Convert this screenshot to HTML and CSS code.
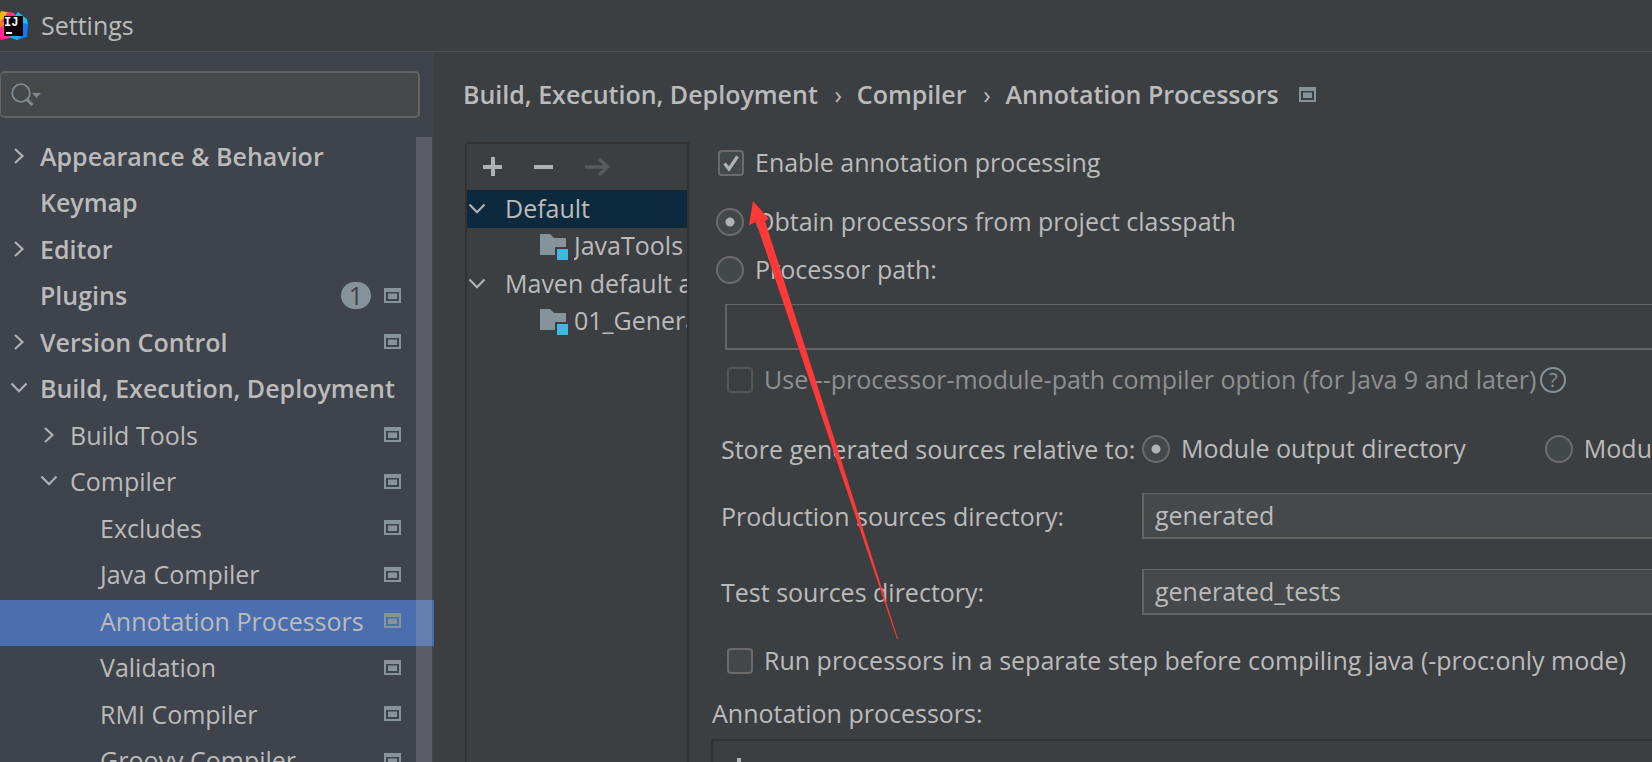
FILE: index.html
```html
<!DOCTYPE html>
<html lang="en">
<head>
<meta charset="utf-8">
<title>Settings</title>
<link rel="stylesheet" href="styles.css">
</head>
<body>
<svg class="defs" aria-hidden="true">
  <symbol id="right" viewBox="0 0 16 18"><path d="M4 2l7.500 7-7.500 7" fill="none" stroke="currentColor" stroke-width="2.200"/></symbol>
  <symbol id="down" viewBox="0 0 18 16"><path d="M1.500 3.500L9 11.200l7.500-7.700" fill="none" stroke="currentColor" stroke-width="2.200"/></symbol>
  <symbol id="project" viewBox="0 0 17 15"><path fill="currentColor" fill-rule="evenodd" d="M0 0h17v15H0zM2 4v9h13V4z"/><path fill="currentColor" d="M4 5.500h9v5.500H4z"/></symbol>
  <symbol id="module" viewBox="0 0 29 28"><path fill="#87939a" d="M0 1h10l4 4h12v9h-11v8H0z"/><path fill="#40b6e0" d="M17 16h11v11H17z"/></symbol>
  <symbol id="plus" viewBox="0 0 20 20"><path fill="currentColor" d="M8 0h4v8h7v4h-7v7H8v-7H0V8h8z"/></symbol>
  <symbol id="minus" viewBox="0 0 20 20"><path fill="currentColor" d="M0 8h19v4H0z"/></symbol>
  <symbol id="forward" viewBox="0 0 25 20"><path d="M0 10h22M14 2l8.500 8-8.500 8" fill="none" stroke="currentColor" stroke-width="3.500"/></symbol>
</svg>

<header class="titlebar">
  <svg class="logo" viewBox="0 0 28 30" aria-hidden="true">
    <path fill="#fdb60d" d="M1 0l12 2-6 10-7 2V3z"/>
    <path fill="#ff318c" d="M8 1l6 1 3 6-8 6-9 2v-4z"/>
    <path fill="#ff2d90" d="M0 15l7-3 7 14-13 3-1-2z"/>
    <path fill="#fc801d" d="M0 10l6 2-6 5z"/>
    <path fill="#07c3f2" d="M18 1l9 7 1 6-8 6-6-14z"/>
    <path fill="#087cfa" d="M28 13l-1 13-10 3-5-5 10-12z"/>
    <path fill="#21a8fa" d="M9 26l8-3 4 3-4 3z"/>
    <path fill="#0b0206" d="M4 5h19v20H4z"/>
    <text class="logo-text" x="4" y="15">IJ</text>
    <path fill="#fff" d="M6 21h6v2H6z"/>
  </svg>
  <h1 class="title">Settings</h1>
</header>

<div class="body">
  <aside class="sidebar">
    <div class="search">
      <svg class="search-icon" viewBox="0 0 32 24" aria-hidden="true"><circle cx="10" cy="10" r="8.800" fill="none" stroke="#7f8b91" stroke-width="1.800"/><path d="M15.500 16l6 6" stroke="#7f8b91" stroke-width="3"/><path fill="#7f8b91" d="M21 10h9l-4.500 5z"/></svg>
      <input class="search-input" type="text" aria-label="Search settings">
    </div>
    <div class="tree-area">
      <nav class="tree" aria-label="Settings categories">
        <a class="row top" href="#"><svg class="chev"><use href="#right"/></svg><span class="name">Appearance &amp; Behavior</span></a>
        <a class="row top" href="#"><span class="chev"></span><span class="name">Keymap</span></a>
        <a class="row top" href="#"><svg class="chev"><use href="#right"/></svg><span class="name">Editor</span></a>
        <a class="row top" href="#"><span class="chev"></span><span class="name">Plugins</span><span class="badge">1</span><svg class="proj"><use href="#project"/></svg></a>
        <a class="row top" href="#"><svg class="chev"><use href="#right"/></svg><span class="name">Version Control</span><svg class="proj"><use href="#project"/></svg></a>
        <a class="row top" href="#"><svg class="chev"><use href="#down"/></svg><span class="name">Build, Execution, Deployment</span></a>
        <a class="row second" href="#"><svg class="chev"><use href="#right"/></svg><span class="name">Build Tools</span><svg class="proj"><use href="#project"/></svg></a>
        <a class="row second" href="#"><svg class="chev"><use href="#down"/></svg><span class="name">Compiler</span><svg class="proj"><use href="#project"/></svg></a>
        <a class="row third" href="#"><span class="name">Excludes</span><svg class="proj"><use href="#project"/></svg></a>
        <a class="row third" href="#"><span class="name">Java Compiler</span><svg class="proj"><use href="#project"/></svg></a>
        <a class="row third selected" href="#" aria-current="page"><span class="name">Annotation Processors</span><svg class="proj"><use href="#project"/></svg></a>
        <a class="row third" href="#"><span class="name">Validation</span><svg class="proj"><use href="#project"/></svg></a>
        <a class="row third" href="#"><span class="name">RMI Compiler</span><svg class="proj"><use href="#project"/></svg></a>
        <a class="row third" href="#"><span class="name">Groovy Compiler</span><svg class="proj"><use href="#project"/></svg></a>
      </nav>
      <div class="scrollbar"></div>
    </div>
  </aside>

  <main class="main">
    <nav class="crumbs" aria-label="Breadcrumb">
      <a href="#">Build, Execution, Deployment</a><span class="sep">›</span><a href="#">Compiler</a><span class="sep">›</span><a href="#">Annotation Processors</a>
      <svg class="proj"><use href="#project"/></svg>
    </nav>
    <div class="columns">
      <section class="profiles" aria-label="Profiles">
        <div class="toolbar">
          <button class="tool" type="button" aria-label="Add"><svg class="tool-icon"><use href="#plus"/></svg></button>
          <button class="tool" type="button" aria-label="Remove"><svg class="tool-icon"><use href="#minus"/></svg></button>
          <button class="tool" type="button" aria-label="Move to" disabled><svg class="tool-icon wide"><use href="#forward"/></svg></button>
        </div>
        <div class="profile-list">
          <div class="profile active"><svg class="chev"><use href="#down"/></svg><span class="profile-name">Default</span></div>
          <div class="profile child"><svg class="mod"><use href="#module"/></svg><span class="profile-name">JavaTools</span></div>
          <div class="profile"><svg class="chev"><use href="#down"/></svg><span class="profile-name">Maven default an</span></div>
          <div class="profile child"><svg class="mod"><use href="#module"/></svg><span class="profile-name">01_Genera</span></div>
        </div>
      </section>

      <form class="form">
        <label class="option lead"><input class="check" type="checkbox" checked><span class="option-text">Enable annotation processing</span></label>
        <div class="sources">
          <label class="option"><input class="radio" type="radio" name="source" checked><span class="option-text">Obtain processors from project classpath</span></label>
          <label class="option"><input class="radio" type="radio" name="source"><span class="option-text">Processor path:</span></label>
        </div>
        <div class="path">
          <input class="field empty" type="text" aria-label="Processor path">
          <div class="option-line">
            <label class="option muted"><input class="check" type="checkbox" disabled><span class="option-text">Use --processor-module-path compiler option (for Java 9 and later)</span></label>
            <button class="help" type="button" aria-label="Help">?</button>
          </div>
        </div>
        <div class="store">
          <span class="caption" id="store">Store generated sources relative to:</span>
          <div class="choices" role="radiogroup" aria-labelledby="store">
            <label class="option"><input class="radio" type="radio" name="store" checked><span class="option-text">Module output directory</span></label>
            <label class="option"><input class="radio" type="radio" name="store"><span class="option-text">Module content root</span></label>
          </div>
          <label class="caption" for="prod">Production sources directory:</label>
          <input class="field" id="prod" type="text" value="generated">
          <label class="caption" for="test">Test sources directory:</label>
          <input class="field" id="test" type="text" value="generated_tests">
        </div>
        <label class="option separate"><input class="check" type="checkbox"><span class="option-text">Run processors in a separate step before compiling java (-proc:only mode)</span></label>
        <h2 class="subhead">Annotation processors:</h2>
        <div class="processors">
          <button class="tool" type="button" aria-label="Add processor"><svg class="tool-icon"><use href="#plus"/></svg></button>
        </div>
      </form>
    </div>
  </main>
</div>

<svg class="pointer" viewBox="0 0 152 440" aria-hidden="true"><path fill="#ff3838" d="M5 1L21 19l-4 2 133 418h-1L8 22l-7 3z"/></svg>
</body>
</html>
```
FILE: styles.css
```css
* { box-sizing: border-box; }

body {
  margin: 0;
  height: 100vh;
  display: flex;
  flex-direction: column;
  overflow: hidden;
  position: relative;
  background: #3c3f41;
  color: #bbbbbb;
  font: 25px/28px "Open Sans", "Noto Sans", sans-serif;
  white-space: nowrap;
}

a { color: inherit; text-decoration: none; }
button, input { font: inherit; color: inherit; margin: 0; }
button { padding: 0; border: 0; background: none; }
svg { display: block; flex: none; }
.defs { position: absolute; width: 0; height: 0; }

.titlebar {
  flex: none;
  display: flex;
  align-items: center;
  gap: 13px;
  height: 52px;
  border-bottom: 1px solid #515456;
}
.logo { width: 28px; height: 30px; }
.logo-text { font: bold 12px "Liberation Mono", monospace; fill: #fff; }
.title { margin: 0; padding-bottom: 2px; font-size: 25px; font-weight: 400; }

.body { flex: 1; min-height: 0; display: flex; }

.sidebar {
  flex: none;
  width: 434px;
  display: flex;
  flex-direction: column;
  padding-top: 19px;
  background: #3e434c;
}
.search {
  flex: none;
  display: flex;
  align-items: center;
  gap: 4px;
  height: 47px;
  margin-right: 14px;
  padding-left: 10px;
  border: 2px solid #646464;
  border-left-width: 1px;
  border-radius: 5px;
  background: #45494a;
}
.search-icon { width: 32px; height: 24px; }
.search-input { flex: 1; min-width: 0; border: 0; outline: 0; background: none; }

.tree-area {
  flex: 1;
  min-height: 0;
  display: grid;
  grid-template-columns: 1fr 18px;
  margin-top: 17px;
  overflow: hidden;
}
.tree {
  grid-area: 1 / 1 / 2 / 3;
  display: grid;
  grid-template-columns: minmax(0, 1fr);
  grid-auto-rows: 46px 47px;
}
.scrollbar {
  grid-area: 1 / 2;
  margin: 2px 2px 0 0;
  background: rgba(166, 166, 166, 0.28);
  z-index: 1;
}
.row { display: flex; align-items: center; padding: 0 33px 5px 0; }
.row.top { padding-left: 10px; font-weight: 600; }
.row.second { padding-left: 40px; }
.row.third { padding-left: 100px; }
.row.selected { background: #4b6eaf; }
.name { margin-right: auto; }
.chev { flex: none; width: 18px; height: 18px; margin-right: 12px; color: #afb1b3; }
.proj { width: 17px; height: 15px; color: #87939a; }
.badge {
  width: 30px;
  height: 27px;
  margin-right: 13px;
  border-radius: 14px;
  background: #87939a;
  color: #3e434c;
  font-weight: 400;
  line-height: 27px;
  text-align: center;
}

.main {
  flex: 1;
  min-width: 0;
  display: flex;
  flex-direction: column;
  padding: 28px 0 0 29px;
}
.crumbs { display: flex; align-items: center; font-weight: 600; }
.sep { width: 39px; padding-left: 2px; font-weight: 400; text-align: center; }
.crumbs .proj { margin-left: 20px; }

.columns { flex: 1; min-height: 0; display: flex; margin-top: 34px; }
.profiles {
  flex: none;
  width: 224px;
  margin-left: 2px;
  border: 2px solid #323232;
  border-bottom: 0;
  overflow: hidden;
}
.toolbar { display: flex; align-items: center; gap: 31px; height: 46px; padding-left: 16px; }
.tool { color: #afb1b3; }
.tool:disabled { color: #5a5a5a; }
.tool-icon { width: 20px; height: 20px; }
.tool-icon.wide { width: 25px; }
.profile-list {
  display: grid;
  grid-template-columns: minmax(0, 1fr);
  grid-auto-rows: 38px 37px;
}
.profile { display: flex; align-items: center; padding-left: 1px; }
.profile-name { min-width: 0; padding-bottom: 2px; line-height: 35px; overflow: hidden; }
.profile .chev { margin-right: 19px; }
.profile.child { padding-left: 73px; }
.profile.active { background: #0d293e; }
.mod { width: 29px; height: 28px; margin-right: 5px; }

.form { flex: 1; min-width: 0; padding: 7px 0 0 22px; overflow: hidden; }
.option { display: flex; align-items: center; gap: 11px; }
.option-text { margin: -1px 0 1px; }
.option.lead { padding-left: 7px; }
.check, .radio {
  appearance: none;
  flex: none;
  border: 2px solid #6b6b6b;
  background: #43494a center / 18px 18px no-repeat;
}
.check { width: 26px; height: 26px; border-radius: 4px; }
.check:checked {
  background-image: url("data:image/svg+xml,%3Csvg xmlns='http://www.w3.org/2000/svg' viewBox='0 0 18 18'%3E%3Cpath d='M2.500 9.500l4.500 5.500L15.500 2.500' fill='none' stroke='%23afb1b3' stroke-width='3.200'/%3E%3C/svg%3E");
}
.check:disabled { border-color: #545556; background-color: #3c3f41; }
.radio { width: 28px; height: 28px; border-radius: 50%; }
.radio:checked { background-image: radial-gradient(circle, #afb1b3 4px, transparent 5px); }

.sources { display: grid; gap: 20px; margin-top: 31px; padding-left: 5px; }
.path { margin-top: 20px; padding-left: 14px; }
.option-line { display: flex; align-items: center; gap: 4px; margin: 16px 0 0 2px; }
.muted { color: #8f8f8f; }
.help {
  width: 26px;
  height: 26px;
  border: 2px solid #87939a;
  border-radius: 50%;
  color: #87939a;
  font-size: 20px;
  line-height: 22px;
}
.field {
  display: block;
  width: 100%;
  min-width: 0;
  height: 46px;
  padding: 0 11px 2px;
  border: 2px solid #646464;
  border-width: 1px 0 2px 2px;
  outline: 0;
  background: #45494a;
}
.field.empty { background: none; }

.store {
  display: grid;
  grid-template-columns: 421px 1fr;
  row-gap: 30px;
  align-items: center;
  margin-top: 41px;
  padding-left: 10px;
}
.choices { display: flex; gap: 79px; min-width: 0; }
.separate { margin-top: 32px; padding-left: 16px; }
.subhead { margin: 24px 0 0; padding-left: 1px; font-size: 25px; font-weight: 400; }
.processors {
  height: 60px;
  margin-top: 12px;
  padding: 13px 0 0 16px;
  border: 2px solid #323232;
  border-right: 0;
}

.pointer { position: absolute; left: 748px; top: 200px; width: 152px; height: 440px; pointer-events: none; }
```
